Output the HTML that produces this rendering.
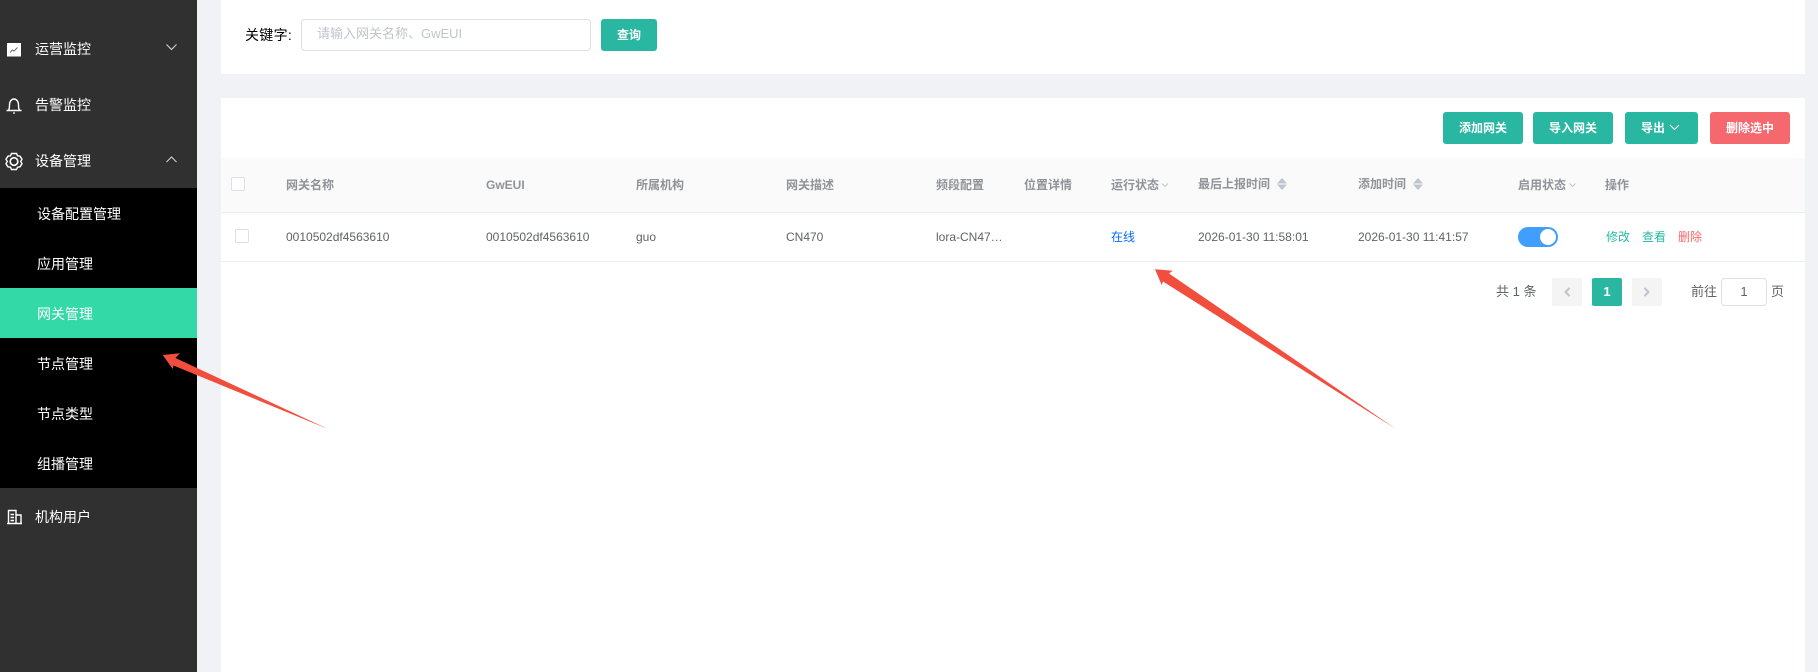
<!DOCTYPE html>
<html lang="zh-CN">
<head>
<meta charset="utf-8">
<title>网关管理</title>
<style>
html,body{margin:0;padding:0;}
body{width:1818px;height:672px;position:relative;overflow:hidden;background:#f0f2f6;font-family:"Liberation Sans","WenQuanYi Zen Hei","Noto Sans CJK SC",sans-serif;}
.a{position:absolute;white-space:nowrap;}
.side{left:0;top:0;width:197px;height:672px;background:#303030;}
.sub{left:0;top:188px;width:197px;height:300px;background:#000;}
.act{left:0;top:288px;width:197px;height:50px;background:#33d9a6;}
.n{color:#fff;font-size:14px;line-height:20px;}
.card{background:#fff;}
.th{color:#909399;font-size:12px;font-weight:bold;line-height:16px;top:177px;}
.td{color:#606266;font-size:12px;line-height:16px;top:229px;}
.btn{height:32px;line-height:32px;top:112px;border-radius:3px;background:#2ab7a2;color:#fff;font-size:12px;font-weight:bold;text-align:center;}
.cb{width:12px;height:12px;border:1px solid #dcdfe6;border-radius:2px;background:#fff;}
.pg{top:278px;width:30px;height:28px;background:#f4f4f5;border-radius:2px;}
</style>
</head>
<body>
<div class="a side"></div>
<div class="a sub"></div>
<div class="a act"></div>

<svg class="a" style="left:0;top:0" width="197" height="672" fill="none">
<rect x="7" y="43" width="14" height="13.500" fill="#fff"/>
<path d="M10 52.500l2.500-2.500 1.500 1 3.500-3.500" stroke="#666" stroke-width="0.900"/>
<path d="M166.500 44.500l5 5 5-5" stroke="#c8c8c8" stroke-width="1.200"/>
<path d="M166.500 162l5-5 5 5" stroke="#c8c8c8" stroke-width="1.200"/>
<path d="M6.500 110.500h15M8.500 110.500c.8-1.500 1-3 1-5.500 0-3.500 2-6 4.500-6s4.500 2.500 4.500 6c0 2.500.2 4 1 5.500" stroke="#fff" stroke-width="1.400"/>
<circle cx="14" cy="113" r="0.900" fill="#fff"/>
<path d="M11.500 153.500h5l1 2.300 2.500.4 2 3-1.300 2.300 1.300 2.300-2 3-2.500.4-1 2.300h-5l-1-2.300-2.500-.4-2-3 1.300-2.300-1.300-2.300 2-3 2.500-.4z" stroke="#fff" stroke-width="1.400"/>
<circle cx="14" cy="161.500" r="3.800" stroke="#fff" stroke-width="1.600"/>
<path d="M7 523.500h15M8.500 523V510.500h7.500V523M16 515h5v8.500M10.500 514.500h3.500M10.500 517.500h3.500M10.500 520.500h3.500" stroke="#fff" stroke-width="1.400"/>
</svg>

<div class="a n" style="left:35px;top:39px">运营监控</div>
<div class="a n" style="left:35px;top:95px">告警监控</div>
<div class="a n" style="left:35px;top:151px">设备管理</div>
<div class="a n" style="left:37px;top:204px">设备配置管理</div>
<div class="a n" style="left:37px;top:254px">应用管理</div>
<div class="a n" style="left:37px;top:304px">网关管理</div>
<div class="a n" style="left:37px;top:354px">节点管理</div>
<div class="a n" style="left:37px;top:404px">节点类型</div>
<div class="a n" style="left:37px;top:454px">组播管理</div>
<div class="a n" style="left:35px;top:507px">机构用户</div>

<div class="a card" style="left:221px;top:0;width:1584px;height:74px"></div>
<div class="a card" style="left:221px;top:98px;width:1584px;height:574px"></div>

<div class="a" style="left:245px;top:25px;font-size:14px;line-height:20px;color:#000;letter-spacing:.3px">关键字:</div>
<div class="a" style="left:301px;top:19px;width:288px;height:30px;border:1px solid #dcdfe6;border-radius:4px;background:#fff"></div>
<div class="a" style="left:317px;top:25px;font-size:13px;line-height:18px;color:#c0c4cc">请输入网关名称、GwEUI</div>
<div class="a btn" style="left:601px;top:19px;width:56px">查询</div>

<div class="a btn" style="left:1443px;width:80px">添加网关</div>
<div class="a btn" style="left:1533px;width:80px">导入网关</div>
<div class="a btn" style="left:1625px;width:73px;text-align:left;text-indent:16px">导出</div>
<svg class="a" style="left:1668px;top:123px" width="14" height="10" fill="none"><path d="M2 2l4.500 4.500L11 2" stroke="#fff" stroke-width="1.100"/></svg>
<div class="a btn" style="left:1710px;width:80px;background:#f4686e">删除选中</div>

<div class="a" style="left:221px;top:158px;width:1584px;height:54px;background:#fafafa"></div>
<div class="a" style="left:221px;top:212px;width:1584px;height:1px;background:#ebeef5"></div>
<div class="a" style="left:221px;top:261px;width:1584px;height:1px;background:#ebeef5"></div>

<div class="a cb" style="left:231px;top:177px"></div>
<div class="a cb" style="left:235px;top:229px"></div>

<div class="a th" style="left:286px">网关名称</div>
<div class="a th" style="left:486px">GwEUI</div>
<div class="a th" style="left:636px">所属机构</div>
<div class="a th" style="left:786px">网关描述</div>
<div class="a th" style="left:936px">频段配置</div>
<div class="a th" style="left:1024px">位置详情</div>
<div class="a th" style="left:1111px">运行状态</div>
<div class="a th" style="left:1198px;top:176px">最后上报时间</div>
<div class="a th" style="left:1358px;top:176px">添加时间</div>
<div class="a th" style="left:1518px">启用状态</div>
<div class="a th" style="left:1605px">操作</div>

<svg class="a" style="left:0;top:0;pointer-events:none" width="1818" height="300" fill="none">
<path d="M1162 183.500l3 3 3-3" stroke="#c0c4cc"/>
<path d="M1569.500 183.500l3 3 3-3" stroke="#c0c4cc"/>
<path d="M1277 183.500h10l-5-5.500zM1277 184.500h10l-5 5.500z" fill="#c0c4cc"/>
<path d="M1413 183.500h10l-5-5.500zM1413 184.500h10l-5 5.500z" fill="#c0c4cc"/>
</svg>

<div class="a td" style="left:286px">0010502df4563610</div>
<div class="a td" style="left:486px">0010502df4563610</div>
<div class="a td" style="left:636px">guo</div>
<div class="a td" style="left:786px">CN470</div>
<div class="a td" style="left:936px">lora-CN47…</div>
<div class="a td" style="left:1111px;color:#0a6cf5">在线</div>
<div class="a td" style="left:1198px">2026-01-30 11:58:01</div>
<div class="a td" style="left:1358px">2026-01-30 11:41:57</div>

<div class="a" style="left:1518px;top:227px;width:40px;height:20px;border-radius:10px;background:#409eff"></div>
<div class="a" style="left:1540px;top:229px;width:16px;height:16px;border-radius:50%;background:#fff"></div>

<div class="a" style="left:1606px;top:229px;font-size:12px;line-height:16px;color:#2ab7a2">修改</div>
<div class="a" style="left:1642px;top:229px;font-size:12px;line-height:16px;color:#2ab7a2">查看</div>
<div class="a" style="left:1678px;top:229px;font-size:12px;line-height:16px;color:#f4686e">删除</div>

<div class="a" style="left:1496px;top:283px;font-size:13px;line-height:18px;color:#606266">共 1 条</div>
<div class="a pg" style="left:1552px"></div>
<div class="a pg" style="left:1592px;background:#2ab7a2;color:#fff;font-size:13px;font-weight:bold;line-height:28px;text-align:center">1</div>
<div class="a pg" style="left:1632px"></div>
<svg class="a" style="left:1552px;top:278px" width="110" height="28" fill="none">
<path d="M17.500 10l-4 4 4 4" stroke="#c0c4cc" stroke-width="2"/>
<path d="M92.500 10l4 4-4 4" stroke="#c0c4cc" stroke-width="2"/>
</svg>
<div class="a" style="left:1691px;top:283px;font-size:13px;line-height:18px;color:#606266">前往</div>
<div class="a" style="left:1721px;top:278px;width:44px;height:26px;border:1px solid #dcdfe6;border-radius:4px;background:#fff;color:#606266;font-size:13px;line-height:26px;text-align:center">1</div>
<div class="a" style="left:1771px;top:283px;font-size:13px;line-height:18px;color:#606266">页</div>

<svg class="a" style="left:0;top:0;pointer-events:none" width="1818" height="672">
<path d="M162.700 355L180 353.300L175.500 358L328 429L173.500 365.500L172.700 369Z" fill="#f24e3e"/>
<path d="M1155 269.300L1172.700 270.700L1169 273.500L1396 429L1163 281.500L1161.700 285Z" fill="#f24e3e"/>
</svg>
</body>
</html>
